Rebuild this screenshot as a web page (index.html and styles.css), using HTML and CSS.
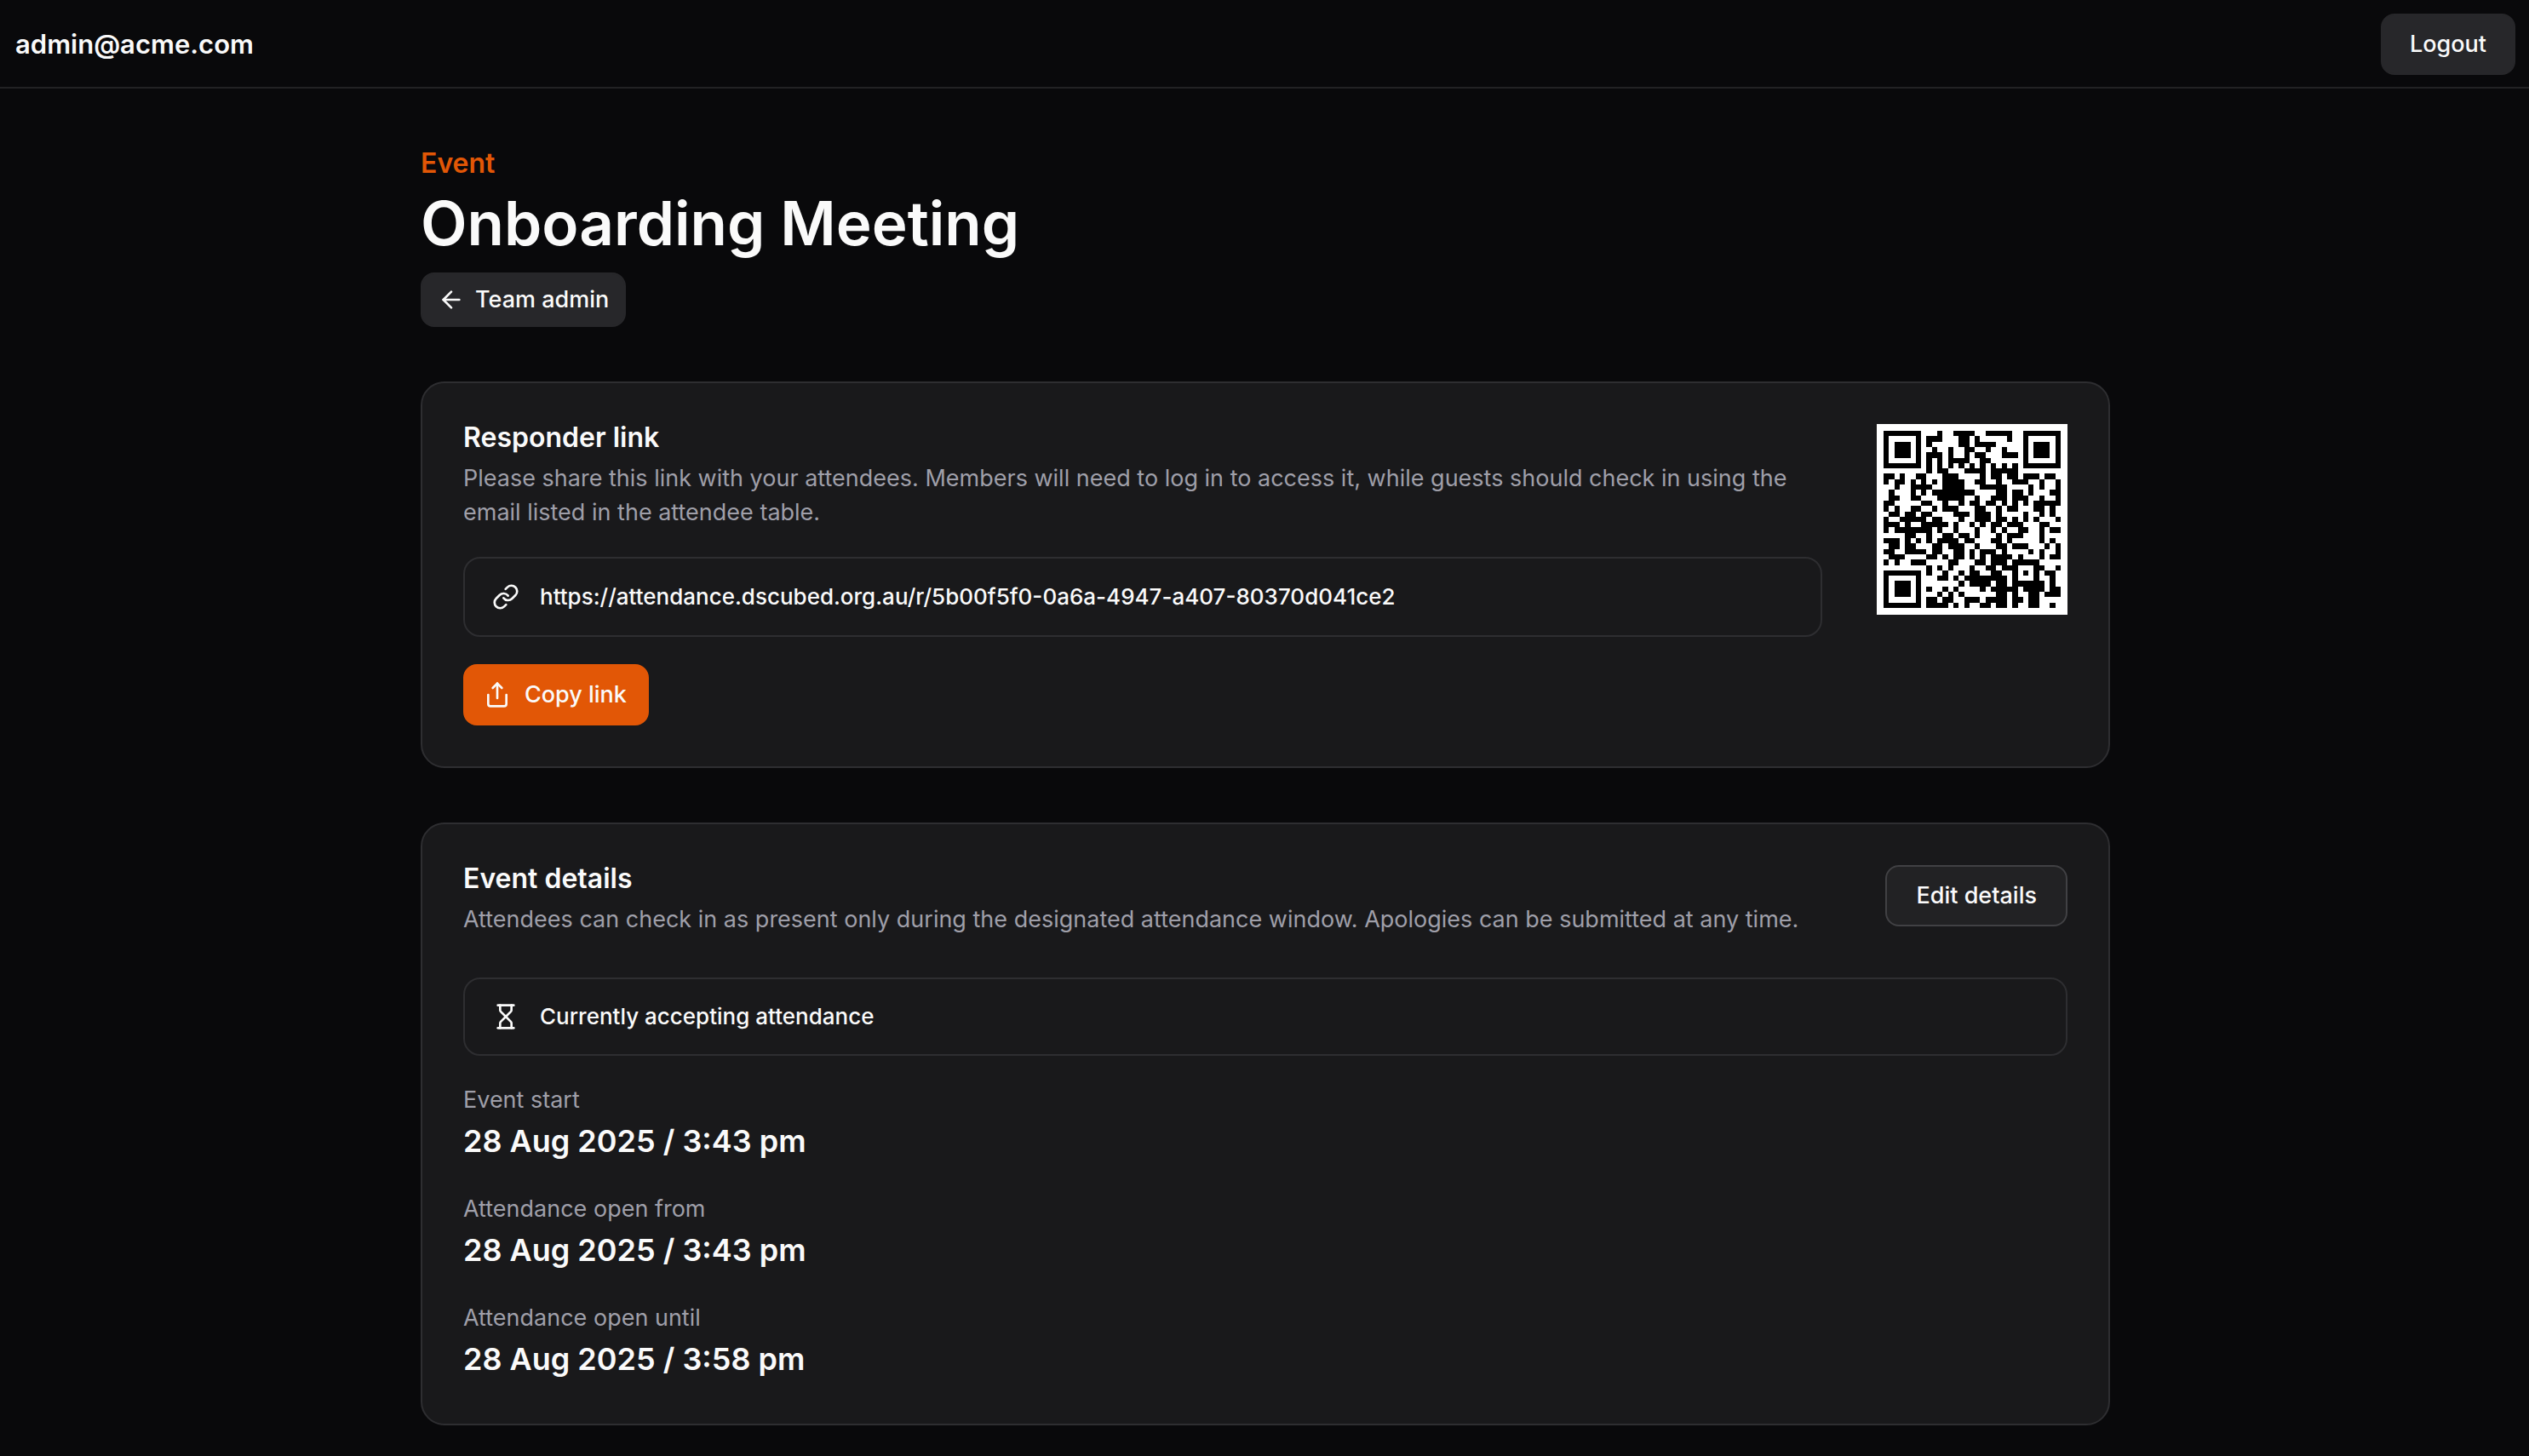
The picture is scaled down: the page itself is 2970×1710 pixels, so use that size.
FILE: index.html
```html
<!DOCTYPE html>
<html lang="en">
<head>
<meta charset="utf-8">
<meta name="viewport" content="width=device-width, initial-scale=1">
<title>Onboarding Meeting</title>
<link rel="stylesheet" href="styles.css">
</head>
<body>
<header class="topbar">
  <span class="account">admin@acme.com</span>
  <button type="button" class="btn btn-secondary">Logout</button>
</header>
<main class="page">
  <div class="page-head">
    <p class="eyebrow">Event</p>
    <h1 class="title">Onboarding Meeting</h1>
    <a class="btn btn-secondary btn-small" href="#team">
      <svg class="icon" viewBox="0 0 24 24" aria-hidden="true"><path d="m12 19-7-7 7-7"/><path d="M19 12H5"/></svg>
      Team admin
    </a>
  </div>

  <section class="card card-split">
    <div class="card-main">
      <div class="card-text">
        <h2 class="heading">Responder link</h2>
        <p class="muted">Please share this link with your attendees. Members will need to log in to access it, while guests should check in using the email listed in the attendee table.</p>
      </div>
      <div class="notice notice-link">
        <svg class="icon" viewBox="0 0 24 24" aria-hidden="true"><path d="M10 13a5 5 0 0 0 7.54.54l3-3a5 5 0 0 0-7.07-7.07l-1.72 1.71"/><path d="M14 11a5 5 0 0 0-7.54-.54l-3 3a5 5 0 0 0 7.07 7.07l1.71-1.71"/></svg>
        <span id="responder-url">https://attendance.dscubed.org.au/r/5b00f5f0-0a6a-4947-a407-80370d041ce2</span>
      </div>
      <button type="button" class="btn btn-primary">
        <svg class="icon" viewBox="0 0 24 24" aria-hidden="true"><path d="M4 12v8a2 2 0 0 0 2 2h12a2 2 0 0 0 2-2v-8"/><path d="m16 6-4-4-4 4"/><path d="M12 2v13"/></svg>
        Copy link
      </button>
    </div>
    <svg class="qr" viewBox="0 0 33 33" role="img" aria-label="QR code for the responder link"><path id="qr-path" d=""/></svg>
  </section>

  <section class="card">
    <div class="card-head">
      <div class="card-text">
        <h2 class="heading">Event details</h2>
        <p class="muted">Attendees can check in as present only during the designated attendance window. Apologies can be submitted at any time.</p>
      </div>
      <button type="button" class="btn btn-outline">Edit details</button>
    </div>
    <div class="notice">
      <svg class="icon" viewBox="0 0 24 24" aria-hidden="true"><path d="M5 22h14"/><path d="M5 2h14"/><path d="M17 22v-4.172a2 2 0 0 0-.586-1.414L12 12l-4.414 4.414A2 2 0 0 0 7 17.828V22"/><path d="M7 2v4.172a2 2 0 0 0 .586 1.414L12 12l4.414-4.414A2 2 0 0 0 17 6.172V2"/></svg>
      <span>Currently accepting attendance</span>
    </div>
    <dl class="times">
      <div>
        <dt class="muted">Event start</dt>
        <dd class="time">28 Aug 2025 / 3:43 pm</dd>
      </div>
      <div>
        <dt class="muted">Attendance open from</dt>
        <dd class="time">28 Aug 2025 / 3:43 pm</dd>
      </div>
      <div>
        <dt class="muted">Attendance open until</dt>
        <dd class="time">28 Aug 2025 / 3:58 pm</dd>
      </div>
    </dl>
  </section>
</main>
<script src="qr.js"></script>
</body>
</html>
```

FILE: styles.css
```css
* {
  box-sizing: border-box;
}

body {
  margin: 0;
  background: #09090b;
  color: #fafafa;
  font-family: Inter, "Liberation Sans", sans-serif;
  font-size: 27px;
  line-height: 40px;
}

h1,
h2,
p,
dl,
dd {
  margin: 0;
}

.topbar {
  display: flex;
  align-items: center;
  justify-content: space-between;
  padding: 16px 16px 14px 18px;
  border-bottom: 2px solid #222224;
}

.account {
  font-size: 31px;
  font-weight: 600;
}

.btn {
  display: inline-flex;
  align-items: center;
  flex: none;
  gap: 16px;
  height: 72px;
  padding: 0 32px;
  border: 2px solid transparent;
  border-radius: 16px;
  color: #fafafa;
  font: inherit;
  font-weight: 500;
  text-decoration: none;
  cursor: pointer;
}

.btn-secondary {
  border-color: #27272a;
  background: #27272a;
}

.btn-outline {
  padding: 0 34px;
  border-color: #414144;
  background: #222224;
}

.btn-primary {
  padding: 0 24px 0 22px;
  border-color: #e25706;
  background: #e25706;
}

.btn-small {
  gap: 12px;
  height: 64px;
  padding: 0 18px;
}

.icon {
  flex: none;
  width: 32px;
  height: 32px;
  fill: none;
  stroke: currentColor;
  stroke-width: 2;
  stroke-linecap: round;
  stroke-linejoin: round;
}

.page {
  display: flex;
  flex-direction: column;
  gap: 64px;
  max-width: 2050px;
  margin: 0 auto;
  padding: 64px 32px 36px 34px;
}

.page-head {
  display: flex;
  flex-direction: column;
  align-items: flex-start;
}

.eyebrow {
  color: #e25706;
  font-size: 32px;
  font-weight: 600;
  line-height: 48px;
}

.title {
  margin-bottom: 12px;
  font-size: 71px;
  font-weight: 600;
  line-height: 92px;
}

.card {
  padding: 48px;
  border: 2px solid #2e2e31;
  border-radius: 28px;
  background: #19191b;
}

.card-split {
  display: flex;
  align-items: flex-start;
  gap: 64px;
}

.card-main {
  display: flex;
  flex: 1;
  flex-direction: column;
  align-items: flex-start;
  gap: 32px;
}

.card-head {
  display: flex;
  align-items: flex-start;
  justify-content: space-between;
  gap: 64px;
  margin-bottom: 48px;
}

.card-text {
  display: flex;
  flex-direction: column;
  gap: 12px;
}

.heading {
  font-size: 32px;
  font-weight: 600;
  line-height: 32px;
}

.muted {
  color: #9f9fa9;
}

.notice {
  display: flex;
  align-items: center;
  align-self: stretch;
  gap: 24px;
  padding: 24px 32px;
  border: 2px solid #2e2e31;
  border-radius: 20px;
  font-size: 26px;
  font-weight: 500;
}

.notice-link {
  padding: 25px 32px;
}

.qr {
  flex: none;
  width: 224px;
  height: 224px;
  padding: 8px;
  background: #fff;
  fill: #000;
  shape-rendering: crispEdges;
}

.times {
  display: flex;
  flex-direction: column;
  gap: 32px;
  margin-top: 32px;
}

.time {
  font-size: 36px;
  font-weight: 600;
  line-height: 56px;
}
```

FILE: qr.js
```js
// Draws the responder link as a version 4, level L QR code (mask 7).
(function () {
  var SIZE = 33, DATA = 80, ECC = 20, FORMAT = 0x6976;
  var text = document.getElementById("responder-url").textContent.trim();

  // Byte-mode segment, terminator and padding
  var bits = [];
  function push(value, length) {
    for (var i = length - 1; i >= 0; i--) bits.push((value >>> i) & 1);
  }
  push(4, 4);
  push(text.length, 8);
  for (var i = 0; i < text.length; i++) push(text.charCodeAt(i), 8);
  push(0, 4);
  var words = [];
  for (i = 0; i < bits.length; i += 8) {
    words.push(parseInt(bits.slice(i, i + 8).join(""), 2));
  }
  for (var pad = 0xec; words.length < DATA; pad ^= 0xec ^ 0x11) words.push(pad);

  // Reed-Solomon error correction
  function multiply(a, b) {
    var z = 0;
    for (var i = 7; i >= 0; i--) {
      z = (z << 1) ^ ((z >>> 7) * 0x11d);
      z ^= ((b >>> i) & 1) * a;
    }
    return z;
  }
  var divisor = [];
  for (i = 0; i < ECC; i++) divisor.push(i === ECC - 1 ? 1 : 0);
  var root = 1;
  for (i = 0; i < ECC; i++) {
    for (var j = 0; j < ECC; j++) {
      divisor[j] = multiply(divisor[j], root);
      if (j + 1 < ECC) divisor[j] ^= divisor[j + 1];
    }
    root = multiply(root, 2);
  }
  var remainder = divisor.map(function () { return 0; });
  words.forEach(function (word) {
    var factor = word ^ remainder.shift();
    remainder.push(0);
    divisor.forEach(function (d, k) { remainder[k] ^= multiply(d, factor); });
  });
  words = words.concat(remainder);

  // Timing, finder and alignment patterns
  var grid = [], fixed = [];
  for (var y = 0; y < SIZE; y++) {
    grid.push(new Array(SIZE).fill(false));
    fixed.push(new Array(SIZE).fill(false));
  }
  function set(x, y, dark) {
    if (x < 0 || y < 0 || x >= SIZE || y >= SIZE) return;
    grid[y][x] = !!dark;
    fixed[y][x] = true;
  }
  for (i = 0; i < SIZE; i++) {
    set(6, i, i % 2 === 0);
    set(i, 6, i % 2 === 0);
  }
  function rings(cx, cy, radius, light) {
    for (var dy = -radius; dy <= radius; dy++) {
      for (var dx = -radius; dx <= radius; dx++) {
        var d = Math.max(Math.abs(dx), Math.abs(dy));
        set(cx + dx, cy + dy, light.indexOf(d) < 0);
      }
    }
  }
  rings(3, 3, 4, [2, 4]);
  rings(SIZE - 4, 3, 4, [2, 4]);
  rings(3, SIZE - 4, 4, [2, 4]);
  rings(26, 26, 2, [1]);

  // Format bits
  function format(i) { return (FORMAT >>> i) & 1; }
  for (i = 0; i < 6; i++) set(8, i, format(i));
  set(8, 7, format(6));
  set(8, 8, format(7));
  set(7, 8, format(8));
  for (i = 9; i < 15; i++) set(14 - i, 8, format(i));
  for (i = 0; i < 8; i++) set(SIZE - 1 - i, 8, format(i));
  for (i = 8; i < 15; i++) set(8, SIZE - 15 + i, format(i));
  set(8, SIZE - 8, true);

  // Masked data, placed in the zigzag order
  var n = 0;
  for (var right = SIZE - 1; right >= 1; right -= 2) {
    if (right === 6) right = 5;
    for (var v = 0; v < SIZE; v++) {
      for (j = 0; j < 2; j++) {
        var x = right - j;
        var row = ((right + 1) & 2) === 0 ? SIZE - 1 - v : v;
        if (fixed[row][x]) continue;
        var dark = n < words.length * 8 && (words[n >>> 3] >>> (7 - (n & 7))) & 1;
        n++;
        var flip = ((x + row) % 2 + (x * row) % 3) % 2 === 0;
        grid[row][x] = !!dark !== flip;
      }
    }
  }

  var d = "";
  grid.forEach(function (cells, y) {
    cells.forEach(function (dark, x) {
      if (dark) d += "M" + x + " " + y + "h1v1h-1z";
    });
  });
  document.getElementById("qr-path").setAttribute("d", d);
})();
```
